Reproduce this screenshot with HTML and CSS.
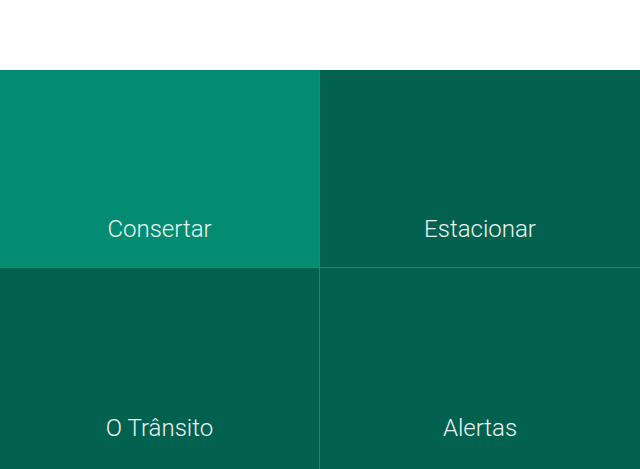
FILE: index.html
```html
<!DOCTYPE html>
<html lang="pt">
<head>
    <meta charset="UTF-8">
    <title>Menu</title>
    <link rel="stylesheet" href="styles.css">
</head>
<body>

<div class="header"></div>

<div class="menu">
    <div class="tile active">Consertar</div>
    <div class="tile">Estacionar</div>
    <div class="tile lower">O Trânsito</div>
    <div class="tile lower">Alertas</div>
</div>

</body>
</html>
```

FILE: styles.css
```css
body {
    margin: 0;
    background: #ffffff;
    font-family: Roboto, "Liberation Sans", sans-serif;
}

.header {
    height: 70px; /* weisser Bereich oben */
}

.menu {
    display: grid;
    grid-template-columns: 319px 320px;
    grid-template-rows: 197px 201px;
    gap: 1px;
    background: #2f8070; /* Trennlinien */
}

.tile {
    display: flex;
    align-items: flex-end;
    justify-content: center;
    padding-bottom: 24px;
    box-sizing: border-box;
    background: #02614f;
    color: #eef3ef;
    font-size: 24px;
    font-weight: 300;
    line-height: 28px;
}

.tile.lower {
    padding-bottom: 27px;
}

.tile.active {
    background: #038c72;
}
```
